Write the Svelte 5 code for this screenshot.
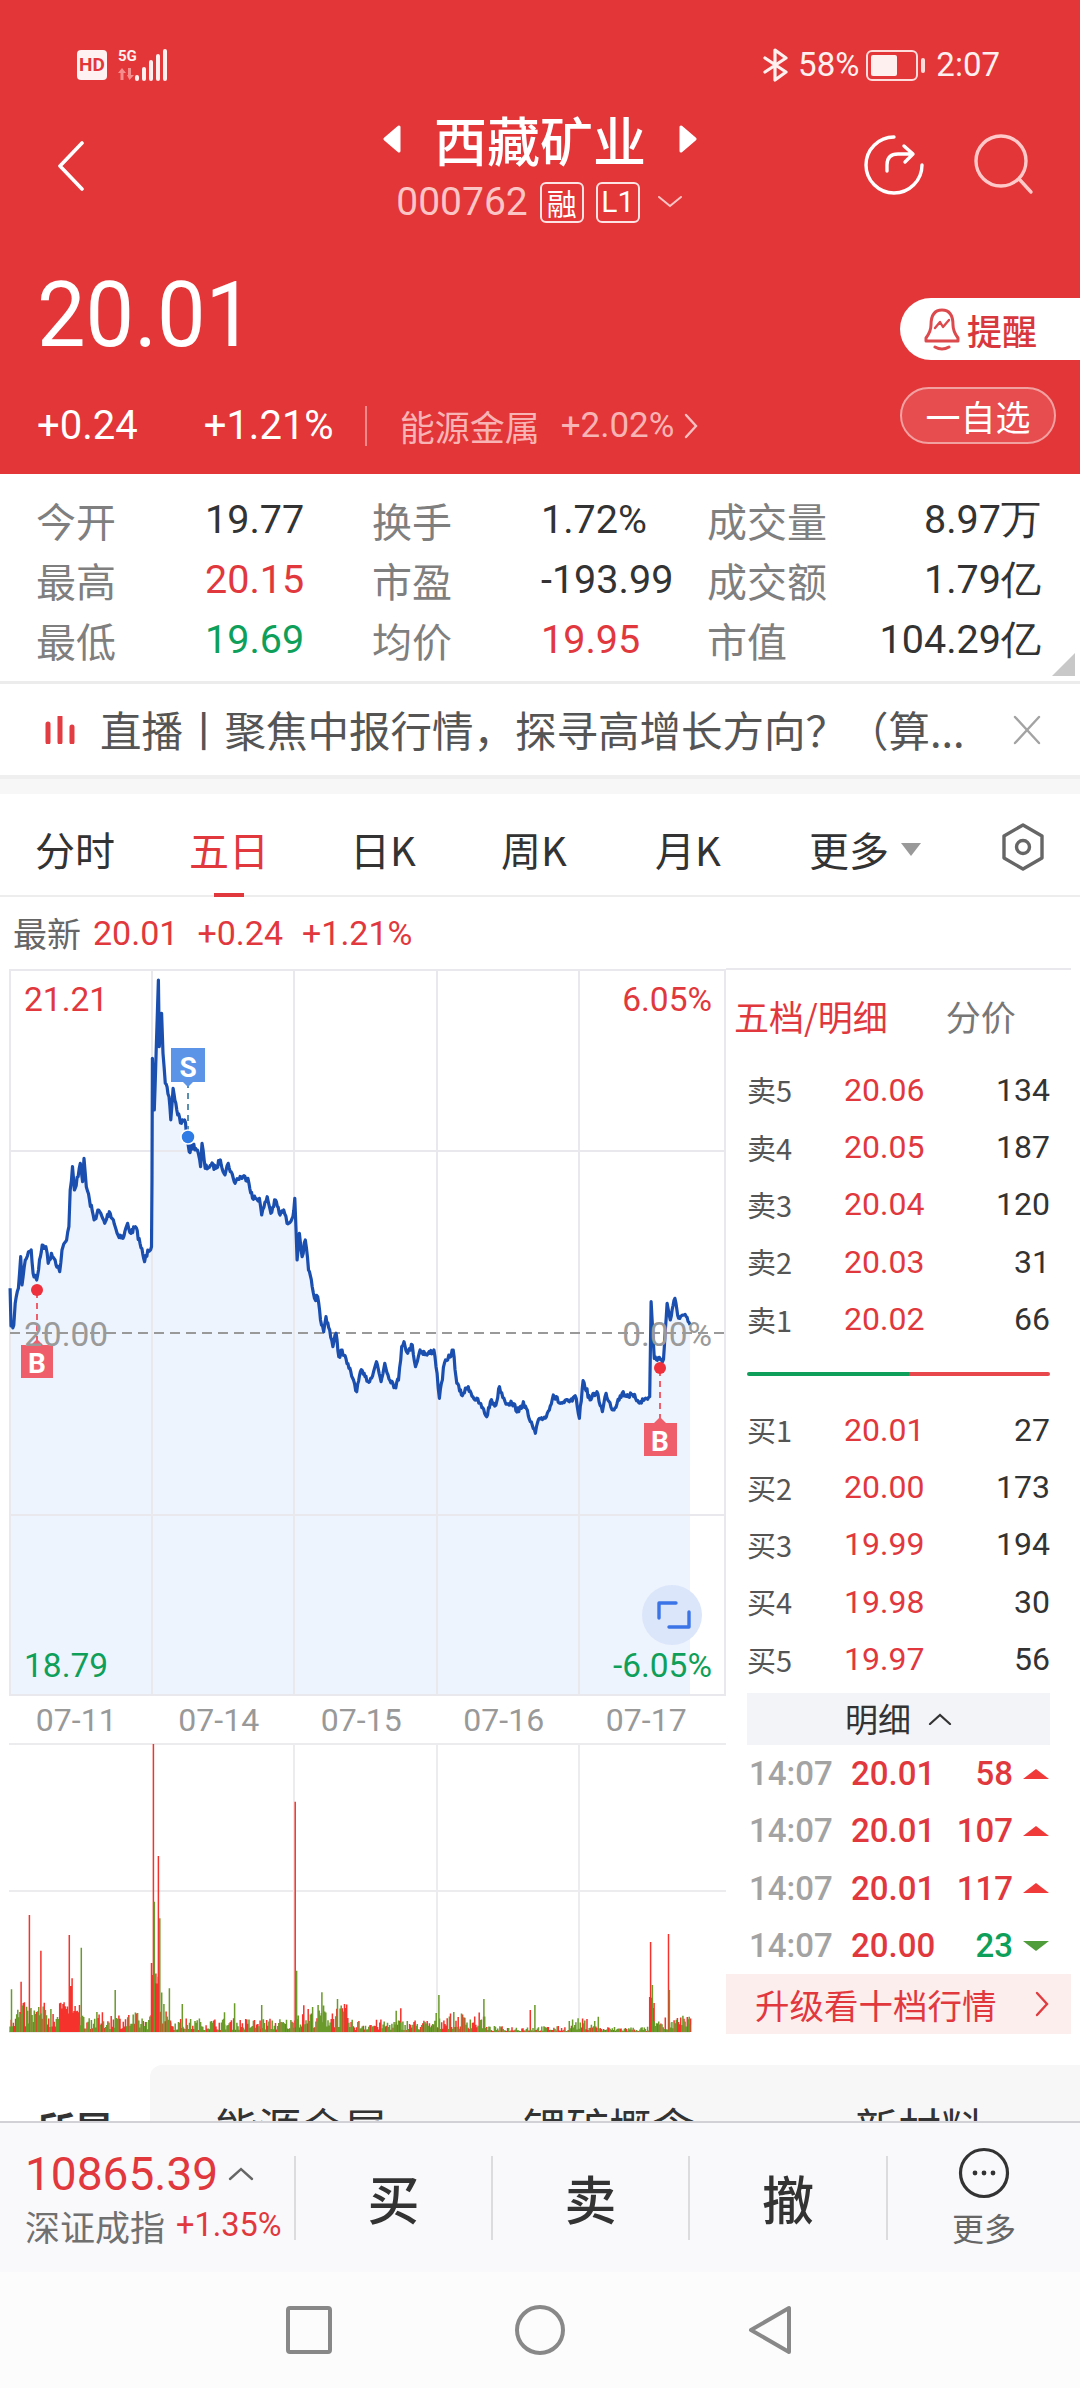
<script>
	const stats = [
		[['今开'], ['19.77', ''], ['换手'], ['1.72%', ''], ['成交量'], ['8.97万', '']],
		[['最高'], ['20.15', 'up'], ['市盈'], ['-193.99', ''], ['成交额'], ['1.79亿', '']],
		[['最低'], ['19.69', 'down'], ['均价'], ['19.95', 'up'], ['市值'], ['104.29亿', '']]
	];
	const tabs = ['分时', '五日', '日K', '周K', '月K'];
	const sells = [['卖5', '20.06', '134'], ['卖4', '20.05', '187'], ['卖3', '20.04', '120'], ['卖2', '20.03', '31'], ['卖1', '20.02', '66']];
	const buys = [['买1', '20.01', '27'], ['买2', '20.00', '173'], ['买3', '19.99', '194'], ['买4', '19.98', '30'], ['买5', '19.97', '56']];
	const trades = [['20.01', '58', 'up'], ['20.01', '107', 'up'], ['20.01', '117', 'up'], ['20.00', '23', 'down']];
	const dates = ['07-11', '07-14', '07-15', '07-16', '07-17'];

	// traced from the chart, x in 1/2.178 px and y in 1/3 px
	const trace = [[22,985],[24,1098],[30,1095],[33,1030],[40,985],[45,890],[48,975],[55,900],[62,875],[68,870],[72,940],[80,960],[88,890],[92,855],[100,860],[105,910],[112,880],[120,900],[130,935],[135,870],[145,840],[150,800],[153,690],[158,620],[162,690],[170,650],[175,610],[180,665],[183,595],[188,680],[195,720],[205,780],[215,750],[228,790],[238,755],[247,780],[255,820],[268,835],[278,790],[285,820],[295,800],[305,850],[315,905],[322,870],[330,860],[331,660],[332,295],[336,450],[340,280],[345,60],[347,260],[352,160],[355,280],[360,370],[368,410],[372,480],[377,385],[385,450],[395,490],[402,480],[408,530],[412,575],[420,555],[430,570],[437,620],[440,550],[447,625],[460,615],[470,625],[480,600],[490,645],[497,610],[510,665],[525,650],[540,655],[550,715],[565,715],[570,765],[582,710],[590,760],[600,720],[610,765],[618,750],[625,790],[638,770],[642,715],[647,900],[652,820],[658,890],[665,840],[672,930],[680,980],[685,1015],[692,1010],[698,1080],[705,1115],[710,1070],[718,1110],[725,1160],[732,1120],[738,1190],[745,1170],[760,1225],[770,1260],[777,1295],[785,1235],[795,1250],[805,1265],[820,1205],[830,1265],[838,1210],[845,1245],[860,1280],[868,1260],[875,1160],[880,1145],[888,1180],[898,1155],[905,1220],[915,1170],[930,1185],[945,1170],[952,1240],[957,1315],[968,1210],[975,1200],[987,1170],[995,1270],[1005,1305],[1020,1280],[1030,1310],[1045,1330],[1060,1370],[1068,1325],[1080,1335],[1088,1280],[1100,1325],[1115,1330],[1130,1355],[1140,1325],[1155,1385],[1166,1420],[1175,1375],[1190,1370],[1205,1305],[1220,1330],[1240,1325],[1255,1315],[1262,1375],[1270,1262],[1285,1320],[1300,1295],[1312,1355],[1320,1300],[1335,1350],[1355,1300],[1380,1310],[1395,1325],[1415,1310],[1418,1025],[1425,1195],[1445,1198],[1453,1030],[1460,1080],[1470,1015],[1478,1075],[1490,1065],[1503,1095]];

	let seed = 7;
	function rnd() {
		seed = (seed * 16807) % 2147483647;
		return seed / 2147483647;
	}

	const pricePts = [];
	for (let i = 0; i < trace.length - 1; i++) {
		const [x0, y0] = trace[i];
		const [x1, y1] = trace[i + 1];
		const steps = Math.max(1, Math.round((x1 - x0) / 2.2));
		for (let s = 0; s < steps; s++) {
			const t = s / steps;
			const jitter = s === 0 ? 0 : (rnd() - 0.5) * 6;
			pricePts.push([(x0 + (x1 - x0) * t) / 2.178, 960 + (y0 + (y1 - y0) * t) / 3 + jitter]);
		}
	}
	pricePts.push([1503 / 2.178, 960 + 1095 / 3]);
	const priceLine = 'M' + pricePts.map((p) => p[0].toFixed(1) + ' ' + p[1].toFixed(1)).join('L');
	const priceFill = priceLine + 'L690 1696L10 1696Z';

	// usual height of the volume bars along the day, same x units
	const volZones = [[22,130,90],[130,175,90],[175,300,60],[300,330,55],[330,345,230],[345,372,150],[372,640,42],[640,760,85],[760,950,38],[950,1060,60],[1060,1240,18],[1240,1300,42],[1300,1415,16],[1415,1425,110],[1425,1505,50]];
	const spikes = [[334,132,'r'],[345,468,'r'],[336,605,'g'],[348,655,'g'],[64,645,'r'],[89,752,'r'],[151,705,'r'],[177,743,'g'],[251,870,'g'],[643,305,'r'],[646,812,'g'],[1417,726,'r'],[1456,702,'r'],[1421,855,'g'],[1458,870,'g'],[46,845,'r'],[25,868,'g'],[157,835,'r'],[154,858,'r'],[701,877,'g'],[735,897,'g'],[956,885,'g'],[1054,897,'g'],[1165,915,'g'],[1155,930,'r'],[570,915,'g'],[511,910,'g'],[489,937,'g'],[397,912,'g'],[873,925,'r'],[863,932,'g'],[1303,950,'g'],[1501,950,'g']];
	let volRed = '';
	let volGreen = '';
	for (const [a, b, h] of volZones) {
		for (let x = a; x < b; x += 2.4) {
			const dense = a === 130 || a === 330 || a === 1415;
			const v = h * (dense ? 0.6 + rnd() * 0.4 : 0.15 + Math.pow(rnd(), 1.3) * 0.85);
			const top = 2032 - v / 3;
			const seg = 'M' + (x / 2.178).toFixed(1) + ' ' + top.toFixed(1) + 'V2032';
			if (dense || rnd() < 0.5) volRed += seg;
			else volGreen += seg;
		}
	}
	for (const [x, y, c] of spikes) {
		const seg = 'M' + (x / 2.178).toFixed(1) + ' ' + (1700 + y / 3).toFixed(1) + 'V2032';
		if (c === 'r') volRed += seg;
		else volGreen += seg;
	}
</script>

<div class="page">
	<header class="header">
		<div class="status">
			<div class="status-left">
				<span class="hd">HD</span>
				<span class="net">
					<span class="net-5g">5G</span>
					<svg width="18" height="12" viewBox="0 0 18 12"><path d="M4 0L8 5H5.500V12H2.500V5H0Z M10 0H13V7H16L11.500 12L9 7H10Z" fill="#f58d8d" /></svg>
				</span>
				<svg class="signal" width="33" height="32" viewBox="0 0 33 32">
					<g fill="none" stroke="#fff0f0" stroke-width="4" stroke-linecap="round">
						<path d="M2 28V30M9 20V30M16 13V30M23 7V30M30 2V30" />
					</g>
				</svg>
			</div>
			<div class="status-right">
				<svg width="26" height="34" viewBox="0 0 26 34"><path d="M2 10L23 24L12 32V2L23 10L2 24" fill="none" stroke="#fff0f0" stroke-width="3.200" stroke-linejoin="round" stroke-linecap="round" /></svg>
				<span class="pct">58%</span>
				<span class="battery"><span class="battery-fill"></span></span>
				<span class="battery-tip"></span>
				<span class="clock">2:07</span>
			</div>
		</div>

		<div class="nav">
			<svg class="back" width="28" height="50" viewBox="0 0 28 50"><path d="M25 2L3 25L25 48" fill="none" stroke="#fff" stroke-width="3.600" stroke-linecap="round" stroke-linejoin="round" /></svg>
			<div class="title-block">
				<div class="title-row">
					<svg width="18" height="28" viewBox="0 0 18 28"><path d="M16 2V26L2 14Z" fill="#fff" stroke="#fff" stroke-width="3" stroke-linejoin="round" /></svg>
					<span class="title">西藏矿业</span>
					<svg width="18" height="28" viewBox="0 0 18 28"><path d="M2 2V26L16 14Z" fill="#fff" stroke="#fff" stroke-width="3" stroke-linejoin="round" /></svg>
				</div>
				<div class="code-row">
					<span class="code">000762</span>
					<span class="badge rong">融</span>
					<span class="badge">L1</span>
					<svg width="28" height="14" viewBox="0 0 28 14"><path d="M3 2L14 11L25 2" fill="none" stroke="#fbc5c5" stroke-width="2" stroke-linecap="round" /></svg>
				</div>
			</div>
			<div class="nav-icons">
				<svg width="64" height="64" viewBox="0 0 64 64">
					<path d="M32 4A28 28 0 1 0 60 32" fill="none" stroke="#fff" stroke-width="3.400" stroke-linecap="round" />
					<path d="M25 38V32Q25 21 36 21H50M42 13L51 21L43 29" fill="none" stroke="#fff" stroke-width="3.400" stroke-linecap="round" stroke-linejoin="round" />
				</svg>
				<svg width="64" height="64" viewBox="0 0 64 64">
					<circle cx="28" cy="28" r="25" fill="none" stroke="#ffc9c9" stroke-width="3.400" />
					<path d="M47 47L58 59" stroke="#ffc9c9" stroke-width="3.400" stroke-linecap="round" />
				</svg>
			</div>
		</div>

		<div class="quote">
			<div class="quote-main">
				<div class="price">20.01</div>
				<div class="change">
					<span class="chg-a">+0.24</span>
					<span class="chg-b">+1.21%</span>
					<span class="chg-sep"></span>
					<span class="sector">能源金属</span>
					<span class="sector-pct">+2.02%</span>
					<svg width="14" height="26" viewBox="0 0 14 26"><path d="M2 2L12 13L2 24" fill="none" stroke="#f8c0c0" stroke-width="2.400" stroke-linecap="round" /></svg>
				</div>
			</div>
			<div class="actions">
				<div class="pill remind">
					<svg width="36" height="44" viewBox="0 0 36 44">
						<path d="M18 3C9 3 7 11 7 18C7 24 5 27 2 31V34H34V31C31 27 29 24 29 18C29 11 27 3 18 3Z" fill="none" stroke="#dc4a4e" stroke-width="3" stroke-linejoin="round" />
						<path d="M11 40Q18 44 25 40" fill="none" stroke="#dc4a4e" stroke-width="3" stroke-linecap="round" />
						<path d="M11 21L16 15L19 20L25 13" fill="none" stroke="#dc4a4e" stroke-width="2.400" stroke-linecap="round" stroke-linejoin="round" />
					</svg>
					<span>提醒</span>
				</div>
				<div class="pill watch">一自选</div>
			</div>
		</div>
	</header>

	<main class="content">
		<section class="stats">
			{#each stats as row}
				<div class="stat-row">
					{#each row as cell, i}
						{#if i % 2 === 0}
							<span class="stat-label">{cell[0]}</span>
						{:else}
							<span class="stat-value {cell[1]}" class:right={i === 5}>{cell[0]}</span>
						{/if}
					{/each}
				</div>
			{/each}
			<span class="corner"></span>
		</section>

		<section class="news">
			<svg width="30" height="28" viewBox="0 0 30 28"><path d="M3 8V26M15 1V26M27 11V26" stroke="#e23d42" stroke-width="5" stroke-linecap="round" /></svg>
			<span class="news-text">直播丨聚焦中报行情，探寻高增长方向？（算...</span>
			<svg class="news-close" width="30" height="30" viewBox="0 0 30 30"><path d="M3 2L27 28M27 2L3 28" stroke="#a3a3a3" stroke-width="2.400" stroke-linecap="round" /></svg>
		</section>

		<nav class="tabs">
			{#each tabs as tab, i}
				<span class="tab" class:active={i === 1}>{tab}</span>
			{/each}
			<span class="tab more">更多<i class="tri"></i></span>
			<svg class="gear" width="44" height="50" viewBox="0 0 44 50">
				<path d="M22 3L41 14V36L22 47L3 36V14Z" fill="none" stroke="#666" stroke-width="3.400" stroke-linejoin="round" />
				<circle cx="22" cy="25" r="6.500" fill="none" stroke="#666" stroke-width="3.400" />
			</svg>
		</nav>

		<div class="latest">
			<span class="latest-label">最新</span>
			<span>20.01</span>
			<span>+0.24</span>
			<span>+1.21%</span>
		</div>

		<section class="board">
			<div class="charts">
				<div class="price-chart">
					<svg width="726" height="728" viewBox="0 968 726 728">
						<path d={priceFill} fill="#eef4fd" />
						<path d="M9 970H726M9 1151H726M9 1515H726M9 1695H726" stroke="#e9e9ed" stroke-width="2" />
						<path d="M10 969V1696M152 969V1696M294 969V1696M437 969V1696M579 969V1696M725 969V1696" stroke="#e9e9ed" stroke-width="2" />
						<path d="M10 1333H726" stroke="#999" stroke-width="2" stroke-dasharray="10 6" />
						<path d={priceLine} fill="none" stroke="#1a4fb0" stroke-width="3.200" stroke-linejoin="round" />

						<path d="M37 1292V1345" stroke="#ef5f6b" stroke-width="2" stroke-dasharray="6 5" />
						<circle cx="37" cy="1290" r="6" fill="#ee2f3c" />
						<path d="M21 1345H31L37 1339L43 1345H53V1378H21Z" fill="#ef5f6b" />
						<text x="37" y="1373" class="flag">B</text>

						<path d="M188 1082V1132" stroke="#5a8fb0" stroke-width="2" stroke-dasharray="6 5" />
						<circle cx="188" cy="1137" r="7" fill="#2f7be6" stroke="#fff" stroke-width="1.500" />
						<path d="M171 1048H205V1082H193L188 1087L183 1082H171Z" fill="#5c94e8" />
						<text x="188" y="1077" class="flag">S</text>

						<path d="M660 1370V1423" stroke="#ef5f6b" stroke-width="2" stroke-dasharray="6 5" />
						<circle cx="660" cy="1368" r="6" fill="#ee2f3c" />
						<path d="M644 1423H654L660 1417L666 1423H677V1456H644Z" fill="#ef5f6b" />
						<text x="660" y="1451" class="flag">B</text>

						<circle cx="672" cy="1615" r="30" fill="#dbe6fb" />
						<path d="M659 1618V1603H676M689 1612V1627H669" fill="none" stroke="#3b74e6" stroke-width="3.400" stroke-linecap="round" stroke-linejoin="round" />
					</svg>
					<span class="axis tl up">21.21</span>
					<span class="axis tr up">6.05%</span>
					<span class="axis ml">20.00</span>
					<span class="axis mr">0.00%</span>
					<span class="axis bl down">18.79</span>
					<span class="axis br down">-6.05%</span>
				</div>

				<div class="dates">
					{#each dates as d}
						<span>{d}</span>
					{/each}
				</div>

				<svg class="volume" width="726" height="290" viewBox="0 1743 726 290">
					<path d="M9 1744H726M9 1891H726M9 2032H690" stroke="#ececef" stroke-width="2" />
					<path d="M294 1744V2032M437 1744V2032M579 1744V2032" stroke="#ececef" stroke-width="2" />
					<path d={volRed} stroke="#f5322b" stroke-width="1.500" fill="none" />
					<path d={volGreen} stroke="#6a9a2a" stroke-width="1.500" fill="none" />
				</svg>
			</div>

			<aside class="panel">
				<div class="panel-head">
					<span class="panel-active">五档/明细</span>
					<span class="panel-other">分价</span>
				</div>
				<div class="book">
					{#each sells as r}
						<div class="level"><span class="lv">{r[0]}</span><span class="up">{r[1]}</span><span class="qty">{r[2]}</span></div>
					{/each}
				</div>
				<div class="ratio"><span class="ratio-buy"></span><span class="ratio-sell"></span></div>
				<div class="book">
					{#each buys as r}
						<div class="level"><span class="lv">{r[0]}</span><span class="up">{r[1]}</span><span class="qty">{r[2]}</span></div>
					{/each}
				</div>
				<div class="detail-head">
					<span>明细</span>
					<svg width="24" height="12" viewBox="0 0 24 12"><path d="M2 11L12 2L22 11" fill="none" stroke="#333" stroke-width="2.200" stroke-linecap="round" /></svg>
				</div>
				{#each trades as t}
					<div class="trade">
						<span class="trade-time">14:07</span>
						<span class="trade-price up">{t[0]}</span>
						<span class="trade-qty {t[2]}">{t[1]}</span>
						<i class="arrow {t[2]}"></i>
					</div>
				{/each}
				<div class="upgrade">
					<span>升级看十档行情</span>
					<svg width="14" height="26" viewBox="0 0 14 26"><path d="M2 2L12 13L2 24" fill="none" stroke="#e03c40" stroke-width="2.400" stroke-linecap="round" /></svg>
				</div>
			</aside>
		</section>

		<section class="related">
			<span class="related-title">所属</span>
			<div class="related-list">
				<span>能源金属</span>
				<span>锂矿概念</span>
				<span>新材料</span>
			</div>
		</section>
	</main>

	<footer class="footer">
		<div class="toolbar">
			<div class="index">
				<div class="index-top">
					<span class="index-value">10865.39</span>
					<svg width="26" height="14" viewBox="0 0 26 14"><path d="M2 12L13 2L24 12" fill="none" stroke="#666" stroke-width="2.400" stroke-linecap="round" /></svg>
				</div>
				<div class="index-bottom">
					<span class="index-name">深证成指</span>
					<span class="index-pct">+1.35%</span>
				</div>
			</div>
			<span class="tool">买</span>
			<span class="tool">卖</span>
			<span class="tool">撤</span>
			<div class="tool-more">
				<svg width="52" height="52" viewBox="0 0 52 52">
					<circle cx="26" cy="26" r="23.500" fill="none" stroke="#333" stroke-width="3.200" />
					<circle cx="17" cy="26" r="2.400" fill="#333" /><circle cx="26" cy="26" r="2.400" fill="#333" /><circle cx="35" cy="26" r="2.400" fill="#333" />
				</svg>
				<span>更多</span>
			</div>
		</div>
		<div class="sysnav">
			<svg width="46" height="48" viewBox="0 0 46 48"><rect x="2" y="2" width="42" height="44" rx="2" fill="none" stroke="#888" stroke-width="4" /></svg>
			<svg width="50" height="50" viewBox="0 0 50 50"><circle cx="25" cy="25" r="23" fill="none" stroke="#888" stroke-width="4" /></svg>
			<svg width="44" height="50" viewBox="0 0 44 50"><path d="M41 3V47L3 25Z" fill="none" stroke="#888" stroke-width="4" stroke-linejoin="round" /></svg>
		</div>
	</footer>
</div>

<style>
	:global(body) {
		margin: 0;
		background: #fff;
	}

	.page {
		--num: Roboto, sans-serif;
		--cjk: 'Noto Sans CJK SC', sans-serif;
		width: 1080px;
		height: 2388px;
		display: flex;
		flex-direction: column;
		overflow: hidden;
		font-family: Roboto, 'Noto Sans CJK SC', sans-serif;
		color: #333;
	}

	.up {
		color: #e1383e;
	}

	.down {
		color: #0ea05a;
	}

	/* red top block */
	.header {
		height: 474px;
		flex: none;
		background: #e23639;
		color: #fff;
		display: flex;
		flex-direction: column;
	}

	.status {
		height: 47px;
		padding: 48px 80px 0 77px;
		display: flex;
		justify-content: space-between;
	}

	.status-left {
		display: flex;
		align-items: flex-start;
	}

	.hd {
		width: 30px;
		height: 30px;
		margin-top: 2px;
		background: #fff2f2;
		border-radius: 4px;
		color: #e23639;
		font: 700 19px/30px Roboto, sans-serif;
		text-align: center;
	}

	.net {
		margin-left: 11px;
		display: flex;
		flex-direction: column;
		gap: 3px;
	}

	.net-5g {
		font: 700 15px/17px var(--num);
		color: #fff0f0;
	}

	.signal {
		margin-left: -2px;
		margin-top: 1px;
	}

	.status-right {
		display: flex;
		align-items: center;
		height: 34px;
		color: #fff0f0;
	}

	.pct {
		margin-left: 9px;
		font: 400 33px/34px Roboto, sans-serif;
	}

	.battery {
		margin-left: 7px;
		width: 52px;
		height: 31px;
		box-sizing: border-box;
		border: 2.500px solid #ffdcdc;
		border-radius: 6px;
		padding: 3px;
	}

	.battery-fill {
		display: block;
		width: 26px;
		height: 100%;
		background: #fff0f0;
		border-radius: 2px;
	}

	.battery-tip {
		margin-left: 3px;
		width: 4px;
		height: 15px;
		background: #ffdcdc;
		border-radius: 2px;
	}

	.clock {
		margin-left: 11px;
		font: 400 33px/34px Roboto, sans-serif;
	}

	.nav {
		margin-top: 14px;
		height: 124px;
		position: relative;
		display: flex;
		justify-content: center;
	}

	.back {
		position: absolute;
		left: 57px;
		top: 32px;
	}

	.title-block {
		display: flex;
		flex-direction: column;
		align-items: center;
	}

	.title-row {
		display: flex;
		align-items: center;
		gap: 33px;
		height: 60px;
	}

	.title {
		font: 500 53px/60px var(--cjk);
	}

	.code-row {
		margin-top: 12px;
		display: flex;
		align-items: center;
		color: #fbc5c5;
	}

	.code {
		font: 400 39px/42px var(--num);
	}

	.badge {
		margin-left: 12px;
		width: 44px;
		height: 41px;
		box-sizing: border-box;
		border: 2px solid #fde3e3;
		border-radius: 6px;
		color: #fff;
		font: 400 30px/36px var(--num);
		text-align: center;
	}

	.rong {
		font: 400 30px/36px var(--cjk);
	}

	.code-row svg {
		margin-left: 16px;
	}

	.nav-icons {
		position: absolute;
		right: 43px;
		top: 24px;
		display: flex;
		gap: 47px;
	}

	.quote {
		flex: 1;
		display: flex;
		justify-content: space-between;
	}

	.quote-main {
		padding: 32px 0 0 37px;
	}

	.price {
		font: 400 91px/100px var(--num);
		transform: scaleX(0.95);
		transform-origin: left;
	}

	.change {
		margin-top: 40px;
		display: flex;
		align-items: center;
		height: 42px;
	}

	.chg-a,
	.chg-b {
		font: 400 40px/42px var(--num);
	}

	.chg-b {
		margin-left: 66px;
	}

	.chg-sep {
		margin-left: 31px;
		width: 2px;
		height: 40px;
		background: #f08a8a;
	}

	.sector {
		margin-left: 33px;
		font: 400 35px/42px var(--cjk);
		color: #f8b4b4;
	}

	.sector-pct {
		margin-left: 21px;
		font: 400 35px/42px var(--num);
		color: #f8b4b4;
	}

	.change svg {
		margin-left: 10px;
	}

	.actions {
		margin-top: 65px;
		width: 180px;
		display: flex;
		flex-direction: column;
		gap: 27px;
	}

	.pill {
		display: flex;
		align-items: center;
		box-sizing: border-box;
	}

	.remind {
		height: 62px;
		padding-left: 24px;
		gap: 7px;
		background: #fff;
		border-radius: 31px 0 0 31px;
		color: #d8383d;
		font: 500 35px/1 var(--cjk);
	}

	.watch {
		width: 156px;
		height: 57px;
		justify-content: center;
		background: #e74c4f;
		border: 2px solid #f2a0a0;
		border-radius: 29px;
		font: 400 35px/1 var(--cjk);
	}

	.content {
		flex: 1;
		min-height: 0;
		overflow: hidden;
	}

	/* summary numbers */
	.stats {
		position: relative;
		height: 210px;
		padding-top: 16px;
		box-sizing: border-box;
		border-bottom: 3px solid #ececec;
	}

	.stat-row {
		display: grid;
		grid-template-columns: 169px 167px 169px 166px 170px 164px;
		height: 60px;
		padding-left: 36px;
		align-items: center;
	}

	.stat-label {
		font: 400 40px/60px var(--cjk);
		color: #7f7f7f;
	}

	.stat-value {
		font: 400 39.500px/60px var(--num);
	}

	.stat-value.right {
		text-align: right;
		margin-left: -60px;
	}

	.corner {
		position: absolute;
		right: 5px;
		bottom: 5px;
		width: 0;
		height: 0;
		border-left: 23px solid transparent;
		border-bottom: 23px solid #c8c8c8;
	}

	.news {
		height: 95px;
		padding-left: 45px;
		box-sizing: border-box;
		display: flex;
		align-items: center;
		border-bottom: 4px solid #efefef;
	}

	.news-text {
		margin-left: 25px;
		width: 912px;
		flex: none;
		font: 400 41.500px/1 var(--cjk);
		color: #555;
		white-space: nowrap;
	}

	.tabs {
		margin-top: 15px;
		height: 103px;
		border-bottom: 2px solid #ededed;
		box-sizing: border-box;
		position: relative;
		display: grid;
		grid-template-columns: 154px 161px 151px 154px 154px auto;
		align-items: center;
		padding: 9px 0 0 35px;
		box-shadow: 0 -15px 0 #f7f7f7;
	}

	.tab {
		font: 400 40px/1 var(--cjk);
		color: #333;
	}

	.tab.active {
		color: #e1383e;
		position: relative;
	}

	.tab.active::after {
		content: '';
		position: absolute;
		left: 25px;
		bottom: -28px;
		width: 30px;
		height: 4px;
		background: #e1383e;
	}

	.tab.more {
		display: flex;
		align-items: center;
	}

	.tri {
		margin-left: 12px;
		width: 0;
		height: 0;
		border-left: 10px solid transparent;
		border-right: 10px solid transparent;
		border-top: 13px solid #999;
	}

	.gear {
		position: absolute;
		left: 1001px;
		top: 28px;
	}

	.latest {
		height: 71px;
		padding-left: 13px;
		display: flex;
		align-items: center;
		gap: 19px;
		font: 400 34px/1 var(--num);
		color: #e1383e;
	}

	.latest-label {
		margin-right: -7px;
		font: 400 34px/1 var(--cjk);
		color: #666;
	}

	.board {
		display: grid;
		grid-template-columns: 726px 345px;
		height: 1075px;
	}

	.price-chart {
		position: relative;
		height: 728px;
	}

	.price-chart svg,
	.volume {
		display: block;
	}

	.flag {
		font: 700 28px Roboto, sans-serif;
		fill: #fff;
		text-anchor: middle;
	}

	.axis {
		position: absolute;
		font: 400 33.500px/40px var(--num);
	}

	.tl {
		left: 24px;
		top: 12px;
	}

	.tr {
		right: 14px;
		top: 12px;
	}

	.ml {
		left: 24px;
		top: 347px;
		color: #9a9a9a;
	}

	.mr {
		right: 14px;
		top: 347px;
		color: #9a9a9a;
	}

	.bl {
		left: 24px;
		top: 678px;
	}

	.br {
		right: 14px;
		top: 678px;
	}

	.dates {
		height: 47px;
		padding-left: 5px;
		display: grid;
		grid-template-columns: repeat(5, 142.500px);
		align-items: center;
		justify-items: center;
		font: 400 32px/1 var(--num);
		color: #999;
	}

	/* order book */
	.panel {
		min-width: 0;
		border-top: 2px solid #e9e9ed;
		box-sizing: border-box;
		height: 1075px;
	}

	.panel-head {
		height: 91px;
		padding-left: 8px;
		display: flex;
		align-items: center;
		gap: 58px;
		font: 400 35px/1 var(--cjk);
	}

	.panel-active {
		color: #e1383e;
	}

	.panel-other {
		color: #777;
	}

	.level {
		height: 57.400px;
		margin: 0 21px 0 21px;
		display: grid;
		grid-template-columns: 97px 1fr auto;
		align-items: center;
		font: 400 32px/1 var(--num);
	}

	.lv {
		font: 400 29px/1 var(--cjk);
		color: #555;
	}

	.qty {
		color: #333;
	}

	.ratio {
		margin: 24px 21px 25px;
		height: 4px;
		display: flex;
		border-radius: 2px;
		overflow: hidden;
	}

	.ratio-buy {
		width: 162px;
		background: #0ea05a;
	}

	.ratio-sell {
		flex: 1;
		background: #e8474c;
	}

	.detail-head {
		margin: 5px 21px 0;
		height: 52px;
		background: #f3f4f8;
		display: flex;
		align-items: center;
		justify-content: center;
		gap: 17px;
		font: 400 33px/1 var(--cjk);
		color: #333;
	}

	.trade {
		height: 57.400px;
		margin-left: 23px;
		display: grid;
		grid-template-columns: 102px 82px 80px 36px;
		align-items: center;
		font: 500 33px/1 var(--num);
	}

	.trade-time {
		color: #a3a3a3;
	}

	.trade-qty {
		text-align: right;
	}

	.arrow {
		justify-self: end;
		width: 0;
		height: 0;
		border-left: 13px solid transparent;
		border-right: 13px solid transparent;
	}

	.arrow.up {
		border-bottom: 10px solid #f03a3a;
	}

	.arrow.down {
		border-top: 10px solid #4f9c3a;
	}

	.upgrade {
		height: 60px;
		padding: 0 22px 0 29px;
		display: flex;
		align-items: center;
		justify-content: space-between;
		background: #fdeeee;
		font: 400 34.500px/1 var(--cjk);
		color: #e1383e;
	}

	/* peeks out above the toolbar */
	.related {
		margin-top: 22px;
		display: flex;
		height: 120px;
	}

	.related-title {
		width: 112px;
		padding: 45px 0 0 38px;
		font: 700 37px/1 var(--cjk);
	}

	.related-list {
		flex: 1;
		padding: 40px 0 0 65px;
		background: #f7f7f8;
		border-radius: 12px 0 0 0;
		display: grid;
		grid-template-columns: 308px 332px auto;
		align-content: start;
		font: 400 43px/1 var(--cjk);
		color: #333;
	}

	/* bottom bars */
	.footer {
		height: 267px;
		flex: none;
		display: flex;
		flex-direction: column;
		background: #fcfcfd;
	}

	.toolbar {
		height: 151px;
		box-sizing: border-box;
		border-top: 2px solid #d2d2d6;
		background: #f9f9fb;
		display: grid;
		grid-template-columns: 294px 197px 197px 198px 1fr;
		align-items: center;
	}

	.index {
		padding: 0 0 6px 25px;
		white-space: nowrap;
	}

	.index-top {
		display: flex;
		align-items: center;
		gap: 10px;
	}

	.index-value {
		font: 400 46px/56px var(--num);
		color: #e1383e;
	}

	.index-bottom {
		margin-top: 6px;
		display: flex;
		align-items: center;
		gap: 11px;
	}

	.index-name {
		font: 400 35px/1 var(--cjk);
		color: #707070;
	}

	.index-pct {
		font: 400 32.500px/1 var(--num);
		color: #e1383e;
	}

	.tool {
		height: 84px;
		display: flex;
		align-items: center;
		justify-content: center;
		border-left: 2px solid #dcdcdf;
		font: 500 52px/1 var(--cjk);
	}

	.tool-more {
		height: 84px;
		border-left: 2px solid #dcdcdf;
		display: flex;
		flex-direction: column;
		align-items: center;
		gap: 12px;
		font: 400 32px/1 var(--cjk);
		color: #666;
	}

	.tool-more svg {
		margin-top: -9px;
		flex: none;
	}

	.tool-more span {
		flex: none;
	}

	.sysnav {
		flex: 1;
		display: flex;
		align-items: center;
		justify-content: center;
		gap: 183px;
		padding-right: 3px;
	}
</style>
